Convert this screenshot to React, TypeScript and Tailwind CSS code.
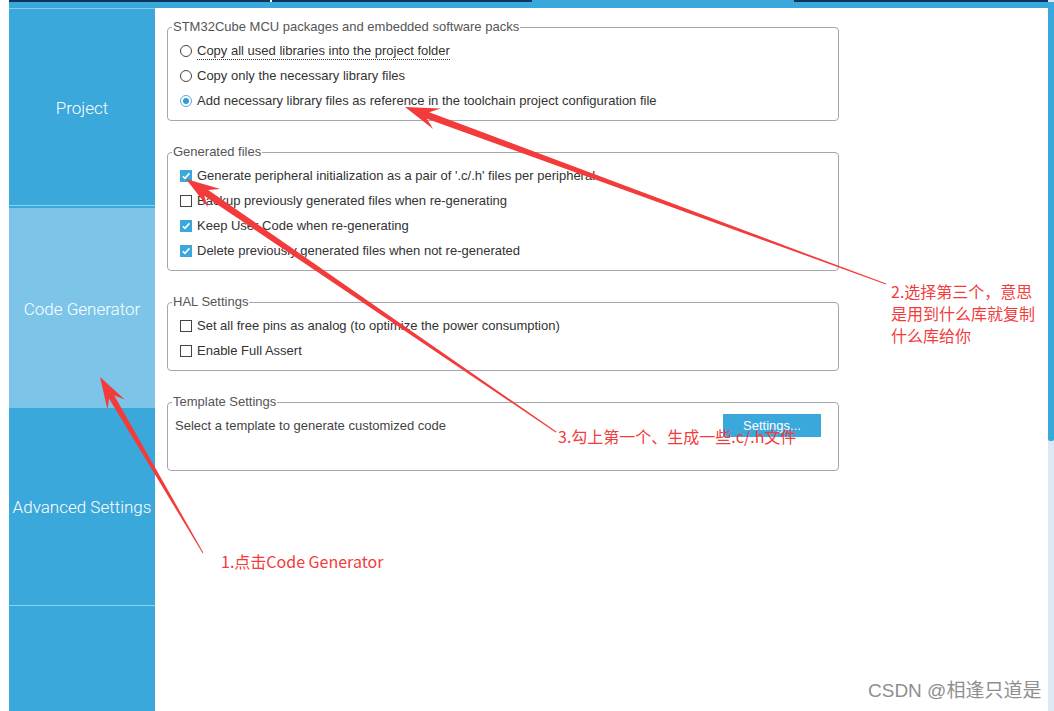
import type { ReactNode } from 'react';

const RED = '#f33b3b';

// tapered arrow polygon: thin tail, wider shaft near the head, notched head
function arrowPoints(x0: number, y0: number, x1: number, y1: number, tailW: number, shaftW: number, headL: number, headW: number) {
  const dx = x1 - x0;
  const dy = y1 - y0;
  const len = Math.hypot(dx, dy);
  const ux = dx / len;
  const uy = dy / len;
  const nx = -uy;
  const ny = ux;
  const jx = x1 - ux * headL * 0.72;
  const jy = y1 - uy * headL * 0.72;
  const bx = x1 - ux * headL;
  const by = y1 - uy * headL;
  const pts = [
    [x0 + (nx * tailW) / 2, y0 + (ny * tailW) / 2],
    [jx + (nx * shaftW) / 2, jy + (ny * shaftW) / 2],
    [bx + (nx * headW) / 2, by + (ny * headW) / 2],
    [x1, y1],
    [bx - (nx * headW) / 2, by - (ny * headW) / 2],
    [jx - (nx * shaftW) / 2, jy - (ny * shaftW) / 2],
    [x0 - (nx * tailW) / 2, y0 - (ny * tailW) / 2],
  ];
  return pts.map((p) => `${p[0].toFixed(1)},${p[1].toFixed(1)}`).join(' ');
}

function Radio({ checked }: { checked?: boolean }) {
  return (
    <span
      className={`w-[12px] h-[12px] rounded-full border flex items-center justify-center bg-white shrink-0 ${
        checked ? 'border-[#5aa9d6]' : 'border-[#444]'
      }`}
    >
      {checked && <span className="w-[6px] h-[6px] rounded-full bg-[#2f9bd6]" />}
    </span>
  );
}

function Check({ checked }: { checked?: boolean }) {
  if (checked) {
    return (
      <span className="w-[12px] h-[12px] bg-[#3aa8db] flex items-center justify-center shrink-0">
        <svg width="10" height="10" viewBox="0 0 10 10">
          <path d="M1.8 5.2 L4 7.4 L8.4 2.4" fill="none" stroke="white" strokeWidth="1.6" />
        </svg>
      </span>
    );
  }
  return <span className="w-[12px] h-[12px] border border-[#444] bg-white shrink-0" />;
}

function Row({ control, children }: { control: ReactNode; children: ReactNode }) {
  return (
    <div className="h-[25px] flex items-center gap-[5px] ml-[8px] text-[13px] text-[#333]">
      {control}
      <span>{children}</span>
    </div>
  );
}

function Group({ title, children, bottom = 'pb-[7px]' }: { title: string; children: ReactNode; bottom?: string }) {
  return (
    <fieldset className={`w-[672px] border border-[#a3a7ab] rounded-[4px] px-[4px] pt-[4px] ${bottom}`}>
      <legend className="px-[1px] text-[13px] leading-[14px] text-[#555]">{title}</legend>
      {children}
    </fieldset>
  );
}

function NavItem({ label, active, h }: { label: string; active?: boolean; h: string }) {
  return (
    <div
      className={`${h} flex items-center justify-center pt-[3px] text-[17px] text-white font-['Roboto','Liberation_Sans',sans-serif] font-light ${
        active ? 'bg-[#7cc5e9]' : 'bg-[#3aa8db]'
      }`}
    >
      {label}
    </div>
  );
}

export default function App() {
  return (
    <div className="relative w-[1054px] h-[711px] overflow-hidden bg-white flex font-['Liberation_Sans',Arial,sans-serif]">
      <div className="w-[9px] bg-white" />

      <div className="flex-1 flex flex-col">
        {/* perspective tabs strip */}
        <div className="h-[2px] flex">
          <div className="w-[261px] bg-[#0c3560]" />
          <div className="w-[2px] bg-white" />
          <div className="w-[260px] bg-[#0c3560]" />
          <div className="w-[262px] bg-[#3aa8db]" />
          <div className="flex-1 bg-[#0c3560]" />
        </div>
        <div className="h-[6px] bg-[#3aa8db]" />

        <div className="flex-1 flex">
          {/* side menu */}
          <aside className="w-[146px] flex flex-col bg-[#3aa8db]">
            <div className="h-[1px] bg-[#7fcdf0]" />
            <NavItem label="Project" h="h-[196px]" />
            <div className="h-[1px] bg-[#8ad3f3]" />
            <div className="h-[2px]" />
            <NavItem label="Code Generator" h="h-[200px]" active />
            <NavItem label="Advanced Settings" h="h-[197px]" />
            <div className="h-[1px] bg-[#8ad3f3]" />
          </aside>

          {/* settings */}
          <main className="flex-1 pl-[12px] pt-[12px] flex flex-col gap-[24px]">
            <Group title="STM32Cube MCU packages and embedded software packs">
              <Row control={<Radio />}>
                <span className="border-b border-dotted border-[#333] pb-[1px]">
                  Copy all used libraries into the project folder
                </span>
              </Row>
              <Row control={<Radio />}>Copy only the necessary library files</Row>
              <Row control={<Radio checked />}>
                Add necessary library files as reference in the toolchain project configuration file
              </Row>
            </Group>

            <Group title="Generated files">
              <Row control={<Check checked />}>Generate peripheral initialization as a pair of '.c/.h' files per peripheral</Row>
              <Row control={<Check />}>Backup previously generated files when re-generating</Row>
              <Row control={<Check checked />}>Keep User Code when re-generating</Row>
              <Row control={<Check checked />}>Delete previously generated files when not re-generated</Row>
            </Group>

            <Group title="HAL Settings">
              <Row control={<Check />}>Set all free pins as analog (to optimize the power consumption)</Row>
              <Row control={<Check />}>Enable Full Assert</Row>
            </Group>

            <Group title="Template Settings" bottom="pb-[33px]">
              <div className="flex items-center h-[23px] mt-[1px]">
                <span className="ml-[3px] text-[13px] text-[#444]">Select a template to generate customized code</span>
                <button className="ml-auto mr-[13px] w-[98px] h-[23px] bg-[#3aa8db] text-white text-[13px]">
                  Settings...
                </button>
              </div>
            </Group>
          </main>
        </div>
      </div>

      {/* scrollbar */}
      <div className="w-[6px] flex flex-col pt-[2px] bg-[#dce9f5]">
        <div className="h-[439px] bg-[#3aa8db] rounded-b-[2px]" />
      </div>

      {/* annotations */}
      <svg className="absolute inset-0 pointer-events-none" width="1054" height="711">
        <polygon points={arrowPoints(203, 553, 100, 377, 1, 6, 32, 20)} fill={RED} />
        <polygon points={arrowPoints(886, 284, 405, 107, 0.8, 7, 34, 22)} fill={RED} />
        <polygon points={arrowPoints(556, 432, 186, 179, 1, 7, 34, 22)} fill={RED} />
      </svg>

      <div className="absolute left-[221px] top-[550px] text-[16px] leading-[22px] text-[#f33b3b] font-['Noto_Sans_CJK_SC',sans-serif]">
        1.点击Code Generator
      </div>
      <div className="absolute left-[891px] top-[280px] text-[16px] leading-[22px] text-[#f33b3b] font-['Noto_Sans_CJK_SC',sans-serif]">
        <div>2.选择第三个，意思</div>
        <div>是用到什么库就复制</div>
        <div>什么库给你</div>
      </div>
      <div className="absolute left-[558px] top-[425px] text-[16px] leading-[22px] text-[#f33b3b] font-['Noto_Sans_CJK_SC',sans-serif]">
        3.勾上第一个、生成一些.c/.h文件
      </div>

      <div className="absolute left-[868px] top-[679px] text-[19px] leading-[24px] text-[#8f8f8f] font-['Liberation_Sans','Noto_Sans_CJK_SC',sans-serif]">
        CSDN @相逢只道是
      </div>
    </div>
  );
}
